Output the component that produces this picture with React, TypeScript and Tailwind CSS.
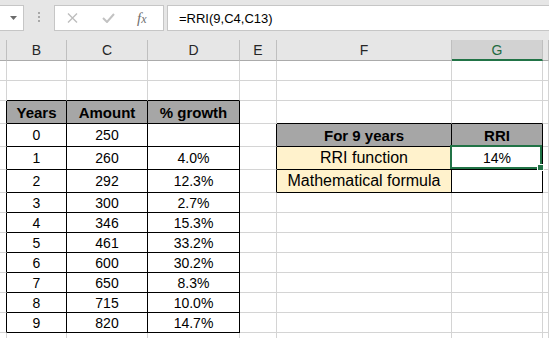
const COLS = "grid grid-cols-[7px_60px_81px_92px_37px_175px_91px_1fr] grid-rows-[100%]";

type Cell = { t: string; bold?: boolean; num?: boolean; fill?: "head" | "cream" };

// sheet rows start at row 1 (index 0)
const rowHeights = [
  "h-5", "h-5", "h-[23px]", "h-[23px]", "h-[23px]", "h-[23px]",
  "h-5", "h-5", "h-5", "h-5", "h-5", "h-5", "h-5", "h-5",
];

const cells: Record<string, Cell> = {
  "2,1": { t: "Years", bold: true, fill: "head" },
  "2,2": { t: "Amount", bold: true, fill: "head" },
  "2,3": { t: "% growth", bold: true, fill: "head" },
  "3,5": { t: "For 9 years", bold: true, fill: "head" },
  "3,6": { t: "RRI", bold: true, fill: "head" },
  "4,5": { t: "RRI function", fill: "cream" },
  "4,6": { t: "14%", num: true },
  "5,5": { t: "Mathematical formula", fill: "cream" },
};

const rows = [
  ["0", "250", ""],
  ["1", "260", "4.0%"],
  ["2", "292", "12.3%"],
  ["3", "300", "2.7%"],
  ["4", "346", "15.3%"],
  ["5", "461", "33.2%"],
  ["6", "600", "30.2%"],
  ["7", "650", "8.3%"],
  ["8", "715", "10.0%"],
  ["9", "820", "14.7%"],
];
rows.forEach((r, i) => {
  r.forEach((v, j) => {
    cells[`${i + 3},${j + 1}`] = { t: v, num: true };
  });
});

const inBox = (r: number, c: number) =>
  (r >= 2 && r <= 12 && c >= 1 && c <= 3) || (r >= 3 && r <= 5 && c >= 5 && c <= 6);

const letters = ["", "B", "C", "D", "E", "F", "G", ""];

function TopBar() {
  return (
    <div className="h-10 bg-[#e6e6e6] flex items-start pt-[5px]">
      <div className="w-6 h-[26px] bg-white border border-l-0 border-[#c6c6c6] flex items-center justify-center pl-[3px]">
        <svg width="7" height="4" viewBox="0 0 7 4">
          <polygon points="0,0 7,0 3.5,4" fill="#6b6b6b" />
        </svg>
      </div>
      <div className="ml-[14px] mt-[7px] flex flex-col gap-[2px]">
        <div className="w-[2px] h-[2px] bg-[#a8a8a8]" />
        <div className="w-[2px] h-[2px] bg-[#a8a8a8]" />
        <div className="w-[2px] h-[2px] bg-[#a8a8a8]" />
      </div>
      <div className="ml-[14px] w-[110px] h-[26px] bg-white border border-[#c6c6c6] flex items-center pl-[12px]">
        <svg width="11" height="10" viewBox="0 0 11 10">
          <path d="M1 0.5 L10 9.5 M10 0.5 L1 9.5" stroke="#bdbdbd" strokeWidth="1.4" />
        </svg>
        <svg width="13" height="10" viewBox="0 0 13 10" className="ml-[24px]">
          <path d="M1 5 L5 9 L12 1" stroke="#c2c2c2" strokeWidth="2" fill="none" />
        </svg>
        <span className="ml-[22px] font-['Liberation_Serif',serif] italic text-[15px] leading-none text-[#6f6f6f]">
          f<span className="text-[12px]">x</span>
        </span>
      </div>
      <div className="ml-[3px] flex-1 h-[26px] bg-white border border-r-0 border-[#c6c6c6] flex items-center pl-[11px] text-[13px] text-black">
        =RRI(9,C4,C13)
      </div>
    </div>
  );
}

function ColumnHeader() {
  return (
    <div className={`${COLS} h-[21px] bg-[#e6e6e6]`}>
      {letters.map((l, c) =>
        c === 6 ? (
          <div
            key={c}
            className="flex items-center justify-center bg-[#d2d2d2] border-r border-r-[#bfbfbf] border-b-2 border-b-[#217346] text-[14px] text-[#1f6b41]"
          >
            {l}
          </div>
        ) : (
          <div
            key={c}
            className="flex items-center justify-center border-r border-r-[#bfbfbf] border-b border-b-[#ababab] text-[14px] text-[#262626]"
          >
            {l}
          </div>
        )
      )}
    </div>
  );
}

function SheetCell({ r, c }: { r: number; c: number }) {
  const cell = cells[`${r},${c}`];
  const right = inBox(r, c) || inBox(r, c + 1) ? "border-r-black" : "border-r-[#d4d4d4]";
  const bottom = inBox(r, c) || inBox(r + 1, c) ? "border-b-black" : "border-b-[#d4d4d4]";
  const fill =
    cell?.fill === "head" ? "bg-[#a6a6a6]" : cell?.fill === "cream" ? "bg-[#fff2cc]" : "bg-white";
  const size = cell?.bold ? "text-[15px] font-bold text-[#1a1a1a]" : cell?.num ? "text-[14px]" : "text-[16px]";
  const selected = r === 4 && c === 6;
  return (
    <div
      className={`relative flex items-center justify-center min-h-0 border-r border-b whitespace-nowrap text-black ${right} ${bottom} ${fill} ${size}`}
    >
      {cell?.t}
      {selected && (
        <div className="absolute -left-[2px] -top-[2px] right-0 bottom-0 border-2 border-[#217346] z-10">
          <div className="absolute -right-[4px] -bottom-[4px] w-[7px] h-[7px] bg-[#217346] border border-white" />
        </div>
      )}
    </div>
  );
}

export default function App() {
  return (
    <div className="w-[549px] h-[338px] overflow-hidden bg-white leading-none font-['Liberation_Sans',Arial,sans-serif]">
      <TopBar />
      <ColumnHeader />
      {rowHeights.map((h, r) => (
        <div key={r} className={`${COLS} ${h}`}>
          {letters.map((_, c) => (
            <SheetCell key={c} r={r} c={c} />
          ))}
        </div>
      ))}
    </div>
  );
}
